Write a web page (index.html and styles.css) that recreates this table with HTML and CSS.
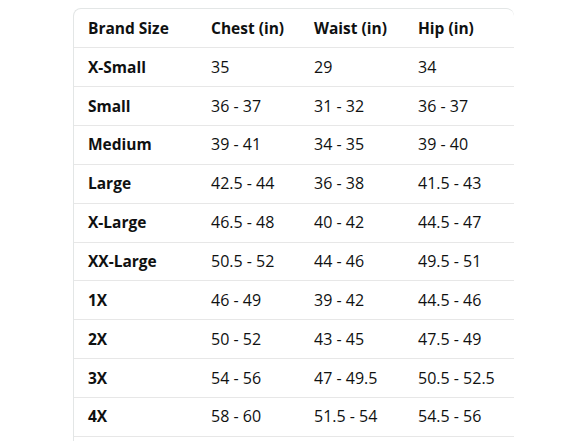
FILE: index.html
```html
<!DOCTYPE html>
<html>
<head>
<meta charset="utf-8">
<link rel="stylesheet" href="styles.css">
</head>
<body>
<div class="page">
  <div class="table-wrap">
    <table class="size-table">
      <colgroup>
        <col class="c1"><col class="c2"><col class="c3"><col class="c4">
      </colgroup>
      <thead>
        <tr><th>Brand Size</th><th>Chest (in)</th><th>Waist (in)</th><th>Hip (in)</th></tr>
      </thead>
      <tbody>
        <tr><th>X-Small</th><td>35</td><td>29</td><td>34</td></tr>
        <tr><th>Small</th><td>36 - 37</td><td>31 - 32</td><td>36 - 37</td></tr>
        <tr><th>Medium</th><td>39 - 41</td><td>34 - 35</td><td>39 - 40</td></tr>
        <tr><th>Large</th><td>42.5 - 44</td><td>36 - 38</td><td>41.5 - 43</td></tr>
        <tr><th>X-Large</th><td>46.5 - 48</td><td>40 - 42</td><td>44.5 - 47</td></tr>
        <tr><th>XX-Large</th><td>50.5 - 52</td><td>44 - 46</td><td>49.5 - 51</td></tr>
        <tr><th>1X</th><td>46 - 49</td><td>39 - 42</td><td>44.5 - 46</td></tr>
        <tr><th>2X</th><td>50 - 52</td><td>43 - 45</td><td>47.5 - 49</td></tr>
        <tr><th>3X</th><td>54 - 56</td><td>47 - 49.5</td><td>50.5 - 52.5</td></tr>
        <tr><th>4X</th><td>58 - 60</td><td>51.5 - 54</td><td>54.5 - 56</td></tr>
      </tbody>
    </table>
  </div>
</div>
</body>
</html>
```

FILE: styles.css
```css
*, *::before, *::after {
  box-sizing: border-box;
}
html, body {
  margin: 0;
  padding: 0;
  background: #ffffff;
}
.page {
  padding: 8px 0 0 73px;
}
.table-wrap {
  width: 441px;
  padding-bottom: 20px;
  border: 1px solid #e3e6e6;
  border-right: none;
  border-bottom: none;
  border-radius: 8px 8px 0 0;
  overflow: hidden;
}
.size-table {
  border-collapse: collapse;
  width: 440px;
  table-layout: fixed;
  font-family: "Open Sans", "Noto Sans", sans-serif;
  font-size: 16px;
  color: #0f1111;
}
.c1 { width: 123px; }
.c2 { width: 103px; }
.c3 { width: 104px; }
.c4 { width: 110px; }
.size-table th,
.size-table td {
  text-align: left;
  padding: 0 0 1px 14px;
  height: 38.85px;
  border-bottom: 1px solid #e7e7e7;
  white-space: nowrap;
  font-weight: 400;
  overflow: hidden;
}
.size-table th {
  font-weight: 700;
  font-size: 15.5px;
}
```
